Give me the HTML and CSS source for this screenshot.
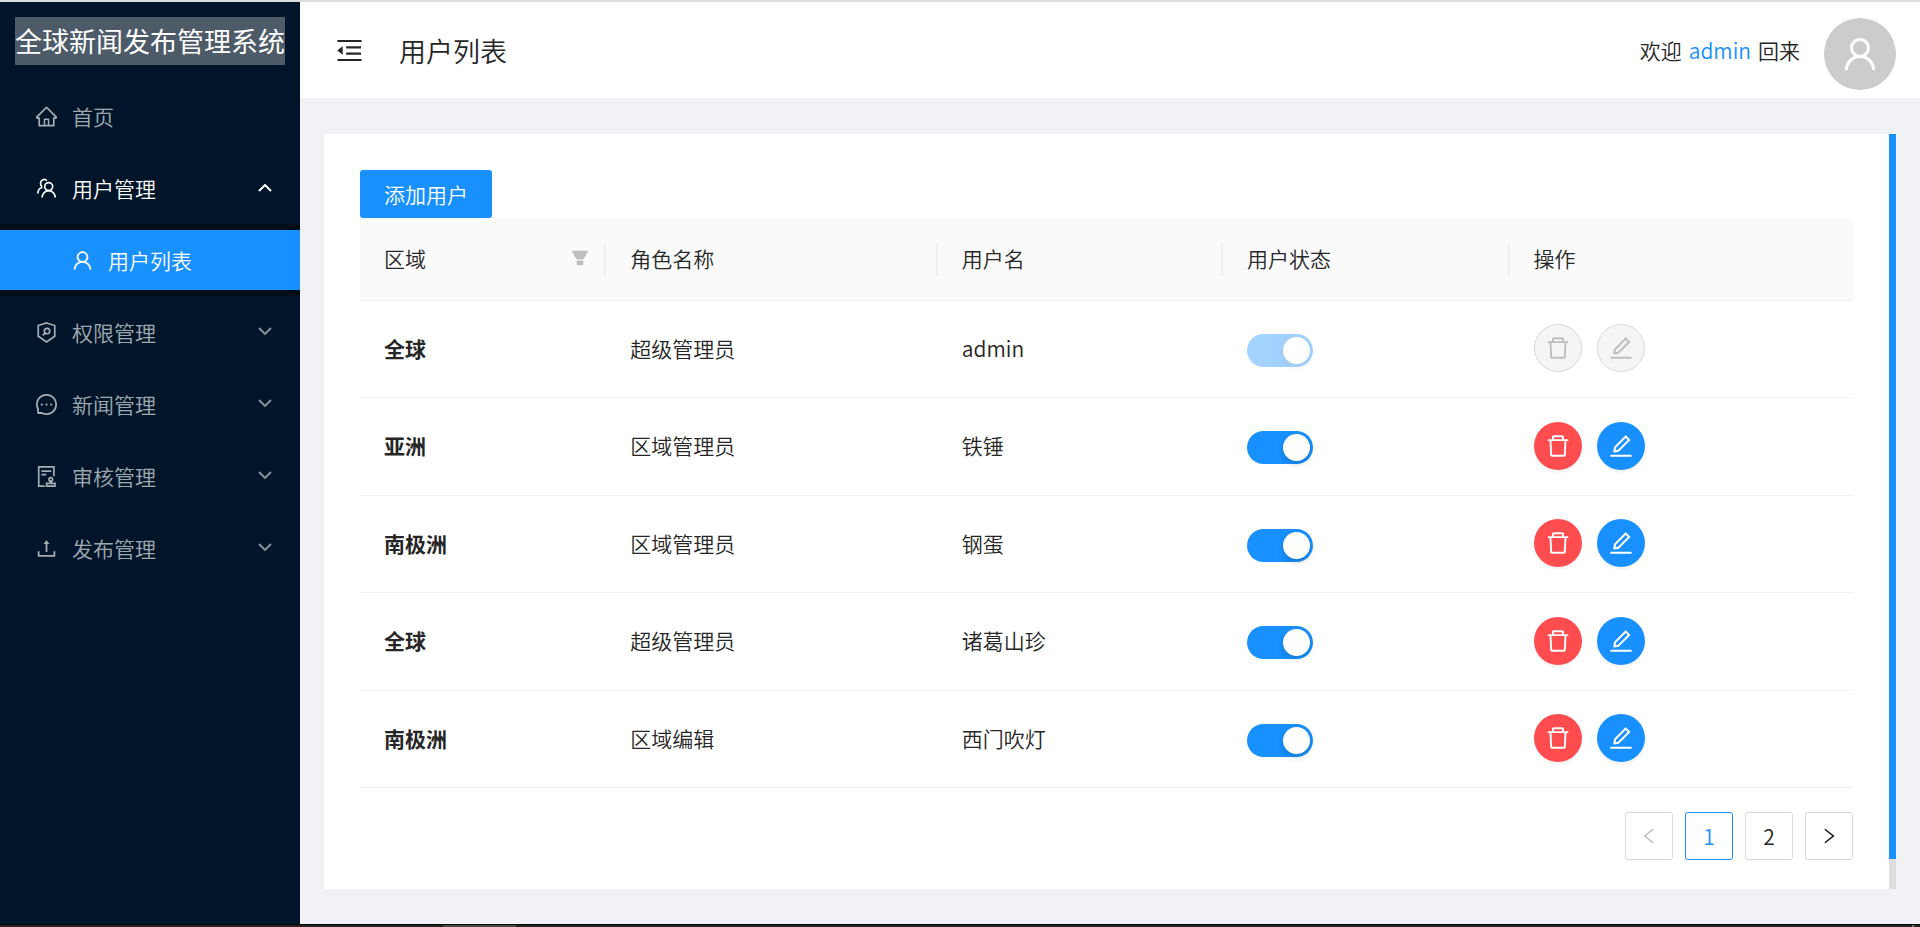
FILE: index.html
```html
<!DOCTYPE html>
<html lang="zh-CN">
<head>
<meta charset="utf-8">
<title>全球新闻发布管理系统</title>
<link rel="stylesheet" href="styles.css">
</head>
<body>
<svg class="sprite" aria-hidden="true">
  <symbol id="i-home" viewBox="64 64 896 896"><path d="M946.5 505L560.1 118.8l-25.9-25.9a31.5 31.5 0 00-44.4 0L77.5 505a63.9 63.9 0 00-18.8 46c.4 35.2 29.7 63.3 64.9 63.3h42.5V940h691.8V614.3h43.4c17.1 0 33.2-6.7 45.3-18.8a63.6 63.6 0 0018.7-45.3c0-17-6.7-33.1-18.8-45.2zM568 868H456V664h112v204zm217.9-325.7V868H632V640c0-22.1-17.9-40-40-40H432c-22.1 0-40 17.9-40 40v228H238.1V542.3h-96l370-369.7 23.1 23.1L882 542.3h-96.1z"/></symbol>
  <symbol id="i-user" viewBox="64 64 896 896"><path d="M858.5 763.6a374 374 0 00-80.6-119.5 375.63 375.63 0 00-119.5-80.6c-.4-.2-.8-.3-1.2-.5C719.5 518 760 444.7 760 362c0-137-111-248-248-248S264 225 264 362c0 82.7 40.5 156 102.8 201.1-.4.2-.8.3-1.2.5-44.8 18.9-85 46-119.5 80.6a375.63 375.63 0 00-80.6 119.5A371.7 371.7 0 00136 901.8a8 8 0 008 8.2h60c4.4 0 7.9-3.5 8-7.8 2-77.2 33-149.5 87.8-204.3 56.7-56.7 132-87.9 212.2-87.9s155.5 31.2 212.2 87.9C779 752.7 810 825 812 902.2c.1 4.4 3.6 7.8 8 7.8h60a8 8 0 008-8.2c-1-47.8-10.9-94.3-29.5-138.2zM512 534c-45.9 0-89.1-17.9-121.6-50.4S340 407.9 340 362c0-45.9 17.9-89.1 50.4-121.6S466.1 190 512 190s89.1 17.9 121.6 50.4S684 316.1 684 362c0 45.9-17.9 89.1-50.4 121.6S557.9 534 512 534z"/></symbol>
  <symbol id="i-team" viewBox="64 64 896 896"><g fill="none" stroke="currentColor" stroke-width="72"><circle cx="605" cy="430" r="170"/><path d="M325 900c0-160 125-295 280-295s280 135 280 295M530 180c-50-55-130-65-195-25-100 60-105 205-10 275M340 470c-120 20-195 120-200 255"/></g></symbol>
  <symbol id="i-scan" viewBox="64 64 896 896"><g fill="none" stroke="currentColor" stroke-width="72"><path d="M512 105L864 215V670L512 915L160 670V215Z"/><circle cx="535" cy="450" r="115"/><path d="M455 535L355 635"/></g></symbol>
  <symbol id="i-message" viewBox="64 64 896 896"><path d="M464 512a48 48 0 1096 0 48 48 0 10-96 0zm200 0a48 48 0 1096 0 48 48 0 10-96 0zm-400 0a48 48 0 1096 0 48 48 0 10-96 0zm661.2-173.6c-22.6-53.7-55-101.9-96.3-143.3a444.35 444.35 0 00-143.3-96.3C630.6 75.7 572.2 64 512 64h-2c-60.6.3-119.3 12.3-174.5 35.9a445.35 445.35 0 00-142 96.5c-40.9 41.3-73 89.3-95.2 142.8-23 55.4-34.6 114.3-34.3 174.9A449.4 449.4 0 00112 714v152a46 46 0 0046 46h152.1A449.4 449.4 0 00510 960h2.1c59.9 0 118-11.6 172.7-34.3a444.48 444.48 0 00142.8-95.2c41.3-40.9 73.8-88.7 96.5-142 23.6-55.2 35.6-113.9 35.9-174.5.3-60.9-11.5-120-34.8-175.6zm-151.1 438C704 845.8 611 884 512 884h-1.7c-60.3-.3-120.2-15.3-173.1-43.5l-8.4-4.5H188V695.2l-4.5-8.4C155.3 633.9 140.3 574 140 513.7c-.4-99.7 37.7-193.3 107.6-263.8 69.8-70.5 163.1-109.5 262.8-109.9h1.7c50 0 98.5 9.7 144.2 28.9 44.6 18.7 84.6 45.6 119 80 34.3 34.3 61.3 74.4 80 119 19.4 46.2 29.1 95.2 28.9 145.8-.6 99.6-39.7 192.9-110.1 262.7z"/></symbol>
  <symbol id="i-audit" viewBox="64 64 896 896"><g fill="none" stroke="currentColor" stroke-width="72"><path d="M440 924H180V100H828V500M296 284H712M296 432H504M516 924V804H872V924ZM694 804V700"/><circle cx="694" cy="636" r="76"/></g></symbol>
  <symbol id="i-upload" viewBox="64 64 896 896"><path d="M400 317.7h73.9V656c0 4.4 3.6 8 8 8h60c4.4 0 8-3.6 8-8V317.7H624c6.7 0 10.4-7.7 6.3-12.9L518.3 163a8 8 0 00-12.6 0l-112 141.7c-4.1 5.3-.4 13 6.3 13zM878 626h-60c-4.4 0-8 3.6-8 8v154H214V634c0-4.4-3.6-8-8-8h-60c-4.4 0-8 3.6-8 8v198c0 17.7 14.3 32 32 32h684c17.7 0 32-14.3 32-32V634c0-4.4-3.6-8-8-8z"/></symbol>
  <symbol id="i-fold" viewBox="64 64 896 896"><path d="M408 442h480c4.4 0 8-3.6 8-8v-56c0-4.4-3.6-8-8-8H408c-4.4 0-8 3.6-8 8v56c0 4.4 3.6 8 8 8zm-8 204c0 4.4 3.6 8 8 8h480c4.4 0 8-3.6 8-8v-56c0-4.4-3.6-8-8-8H408c-4.4 0-8 3.6-8 8v56zm504-486H120c-4.4 0-8 3.6-8 8v56c0 4.4 3.6 8 8 8h784c4.4 0 8-3.6 8-8v-56c0-4.4-3.6-8-8-8zm0 632H120c-4.4 0-8 3.6-8 8v56c0 4.4 3.6 8 8 8h784c4.4 0 8-3.6 8-8v-56c0-4.4-3.6-8-8-8zM115.4 518.9L271.7 642c5.8 4.6 14.4.5 14.4-6.9V388.9c0-7.4-8.5-11.5-14.4-6.9L115.4 505.1a8.74 8.74 0 000 13.8z"/></symbol>
  <symbol id="i-filter" viewBox="64 64 896 896"><path d="M349 838c0 17.7 14.2 32 31.8 32h262.4c17.6 0 31.8-14.3 31.8-32V642H349v196zm531.1-684H143.9c-24.5 0-39.8 26.7-27.5 48l221.3 376h348.8l221.3-376c12.1-21.3-3.2-48-27.7-48z"/></symbol>
  <symbol id="i-delete" viewBox="64 64 896 896"><path d="M360 184h-8c4.4 0 8-3.6 8-8v8h304v-8c0 4.4 3.6 8 8 8h-8v72h72v-80c0-35.3-28.7-64-64-64H352c-35.3 0-64 28.7-64 64v80h72v-72zm504 72H160c-17.7 0-32 14.3-32 32v32c0 4.4 3.6 8 8 8h60.4l24.7 523c1.6 34.1 29.8 61 63.9 61h454c34.2 0 62.3-26.8 63.9-61l24.7-523H888c4.4 0 8-3.6 8-8v-32c0-17.7-14.3-32-32-32zM731.3 840H292.7l-24.2-512h487l-24.2 512z"/></symbol>
  <symbol id="i-edit" viewBox="64 64 896 896"><path d="M257.7 752c2 0 4-.2 6-.5L431.9 722c2-.4 3.9-1.3 5.3-2.8l423.9-423.9a9.96 9.96 0 000-14.1L694.9 114.9c-1.9-1.9-4.4-2.9-7.1-2.9s-5.2 1-7.1 2.9L256.8 538.8c-1.5 1.5-2.4 3.3-2.8 5.3l-29.5 168.2a33.5 33.5 0 009.4 29.8c6.6 6.4 14.9 9.9 23.8 9.9zm67.4-174.4L687.8 215l73.3 73.3-362.7 362.6-88.9 15.7 15.6-89zM880 836H144c-17.7 0-32 14.3-32 32v36c0 4.4 3.6 8 8 8h784c4.4 0 8-3.6 8-8v-36c0-17.7-14.3-32-32-32z"/></symbol>
  <symbol id="i-left" viewBox="64 64 896 896"><path d="M724 218.3V141c0-6.7-7.7-10.4-12.9-6.3L260.3 486.8a31.86 31.86 0 000 50.3l450.8 352.1c5.3 4.1 12.9.4 12.9-6.3v-77.3c0-4.9-2.3-9.6-6.1-12.6l-360-281 360-281.1c3.8-3 6.1-7.7 6.1-12.6z"/></symbol>
  <symbol id="i-right" viewBox="64 64 896 896"><path d="M765.7 486.8L314.9 134.7A7.97 7.97 0 00302 141v77.3c0 4.9 2.3 9.6 6.1 12.6l360 281.1-360 281.1c-3.9 3-6.1 7.7-6.1 12.6V883c0 6.7 7.7 10.4 12.9 6.3l450.8-352.1a31.96 31.96 0 000-50.4z"/></symbol>
  <symbol id="i-down" viewBox="0 0 14 8"><path d="M1 1L7 7L13 1" fill="none" stroke="currentColor" stroke-width="2"/></symbol>
  <symbol id="i-up" viewBox="0 0 14 8"><path d="M1 7L7 1L13 7" fill="none" stroke="currentColor" stroke-width="2"/></symbol>
</svg>
<div class="app">
  <aside class="sider">
    <div class="logo">全球新闻发布管理系统</div>
    <nav class="menu">
      <a class="menu-item" href="#home"><svg class="icon"><use href="#i-home"/></svg>首页</a>
      <button class="menu-item open" type="button" aria-expanded="true"><svg class="icon"><use href="#i-team"/></svg>用户管理<svg class="arrow"><use href="#i-up"/></svg></button>
      <div class="submenu">
        <a class="menu-item selected" href="#users"><svg class="icon"><use href="#i-user"/></svg>用户列表</a>
      </div>
      <button class="menu-item" type="button" aria-expanded="false"><svg class="icon"><use href="#i-scan"/></svg>权限管理<svg class="arrow"><use href="#i-down"/></svg></button>
      <button class="menu-item" type="button" aria-expanded="false"><svg class="icon"><use href="#i-message"/></svg>新闻管理<svg class="arrow"><use href="#i-down"/></svg></button>
      <button class="menu-item" type="button" aria-expanded="false"><svg class="icon"><use href="#i-audit"/></svg>审核管理<svg class="arrow"><use href="#i-down"/></svg></button>
      <button class="menu-item" type="button" aria-expanded="false"><svg class="icon"><use href="#i-upload"/></svg>发布管理<svg class="arrow"><use href="#i-down"/></svg></button>
    </nav>
  </aside>
  <div class="main">
    <header class="header">
      <button class="fold" type="button" aria-label="收起菜单"><svg class="icon"><use href="#i-fold"/></svg></button>
      <h1 class="title">用户列表</h1>
      <div class="welcome"><span>欢迎</span><a href="#me">admin</a><span>回来</span></div>
      <div class="avatar"><svg class="icon"><use href="#i-user"/></svg></div>
    </header>
    <div class="panel">
    <main class="card">
      <button class="add" type="button">添加用户</button>
      <table class="table">
        <colgroup><col class="c-region"><col class="c-role"><col class="c-name"><col class="c-state"><col class="c-ops"></colgroup>
        <thead>
          <tr>
            <th><div class="th-filter">区域<button type="button" class="filter" aria-label="筛选"><svg class="icon"><use href="#i-filter"/></svg></button></div></th>
            <th>角色名称</th><th>用户名</th><th>用户状态</th><th>操作</th>
          </tr>
        </thead>
        <tbody>
          <tr><td><b>全球</b></td><td>超级管理员</td><td>admin</td><td><input class="switch" type="checkbox" role="switch" aria-label="用户状态" checked disabled></td>
            <td><div class="ops"><button class="round danger" type="button" aria-label="删除" disabled><svg class="icon"><use href="#i-delete"/></svg></button><button class="round" type="button" aria-label="编辑" disabled><svg class="icon"><use href="#i-edit"/></svg></button></div></td></tr>
          <tr><td><b>亚洲</b></td><td>区域管理员</td><td>铁锤</td><td><input class="switch" type="checkbox" role="switch" aria-label="用户状态" checked></td>
            <td><div class="ops"><button class="round danger" type="button" aria-label="删除"><svg class="icon"><use href="#i-delete"/></svg></button><button class="round" type="button" aria-label="编辑"><svg class="icon"><use href="#i-edit"/></svg></button></div></td></tr>
          <tr><td><b>南极洲</b></td><td>区域管理员</td><td>钢蛋</td><td><input class="switch" type="checkbox" role="switch" aria-label="用户状态" checked></td>
            <td><div class="ops"><button class="round danger" type="button" aria-label="删除"><svg class="icon"><use href="#i-delete"/></svg></button><button class="round" type="button" aria-label="编辑"><svg class="icon"><use href="#i-edit"/></svg></button></div></td></tr>
          <tr><td><b>全球</b></td><td>超级管理员</td><td>诸葛山珍</td><td><input class="switch" type="checkbox" role="switch" aria-label="用户状态" checked></td>
            <td><div class="ops"><button class="round danger" type="button" aria-label="删除"><svg class="icon"><use href="#i-delete"/></svg></button><button class="round" type="button" aria-label="编辑"><svg class="icon"><use href="#i-edit"/></svg></button></div></td></tr>
          <tr><td><b>南极洲</b></td><td>区域编辑</td><td>西门吹灯</td><td><input class="switch" type="checkbox" role="switch" aria-label="用户状态" checked></td>
            <td><div class="ops"><button class="round danger" type="button" aria-label="删除"><svg class="icon"><use href="#i-delete"/></svg></button><button class="round" type="button" aria-label="编辑"><svg class="icon"><use href="#i-edit"/></svg></button></div></td></tr>
        </tbody>
      </table>
      <nav class="pagination" aria-label="分页">
        <button type="button" aria-label="上一页" disabled><svg class="icon"><use href="#i-left"/></svg></button>
        <button type="button" class="current" aria-current="page">1</button>
        <button type="button">2</button>
        <button type="button" aria-label="下一页"><svg class="icon"><use href="#i-right"/></svg></button>
      </nav>
    </main>
    <div class="rail" aria-hidden="true"><div class="thumb"></div></div>
    </div>
  </div>
</div>
<div class="taskbar"><span class="task"></span><span class="tick"></span></div>
</body>
</html>
```
FILE: styles.css
```css
* { box-sizing: border-box; }

body {
  margin: 0;
  height: 100vh;
  display: flex;
  flex-direction: column;
  border-top: 2px solid #dcdce1;
  background: #f0f2f5;
  color: #262626;
  font: 350 21px/33px "Noto Sans CJK SC", sans-serif;
}

button { font: inherit; color: inherit; border: 0; padding: 0; background: none; cursor: pointer; }
a { color: #1890ff; text-decoration: none; }
.sprite { display: none; }
.icon { display: block; flex: none; width: 21px; height: 21px; fill: currentColor; }

.app { flex: 1; min-height: 0; display: flex; }

.sider { flex: none; width: 300px; background: #001529; }
.logo {
  margin: 15px 15px 21px;
  height: 48px;
  line-height: 48px;
  font-size: 27px;
  font-weight: 400;
  white-space: nowrap;
  color: #fff;
  background: rgba(255, 255, 255, .3);
}
.menu { display: flex; flex-direction: column; gap: 12px; }
.menu-item {
  display: flex;
  align-items: center;
  gap: 15px;
  width: 100%;
  height: 60px;
  padding: 0 28px 0 36px;
  color: rgba(255, 255, 255, .65);
}
.menu-item.open { color: #fff; }
.submenu { margin: -6px 0; padding: 6px 0; background: #000c17; }
.menu-item.selected { padding-left: 72px; color: #fff; background: #1890ff; }
.arrow { flex: none; width: 14px; height: 8px; margin: 0 0 3px auto; opacity: .8; }
.open .arrow { margin-bottom: 0; opacity: 1; }

.main { flex: 1; min-width: 0; display: flex; flex-direction: column; }
.header {
  flex: none;
  display: flex;
  align-items: center;
  height: 96px;
  padding: 0 24px 0 36px;
  background: #fff;
}
.fold .icon { width: 27px; height: 27px; }
.title { margin: 0 0 0 36px; font-size: 27px; font-weight: 350; }
.welcome { display: flex; gap: 7px; margin: 0 24px 0 auto; }
.avatar {
  display: flex;
  align-items: center;
  justify-content: center;
  width: 72px;
  height: 72px;
  margin-top: 8px;
  border-radius: 50%;
  color: #fff;
  background: #ccc;
}
.avatar .icon { width: 36px; height: 36px; }

.panel {
  flex: 1;
  min-height: 0;
  display: flex;
  margin: 36px 24px 35px;
  background: #fff;
}
.card {
  flex: 1;
  min-width: 0;
  padding: 36px 36px 60px;
  overflow-y: auto;
  scrollbar-width: none;
}
.rail { flex: none; width: 7px; background: #ddd; }
.thumb { height: 96%; background: #1890ff; }

.add {
  display: block;
  height: 48px;
  padding: 0 24px;
  border-radius: 3px;
  color: #fff;
  background: #1890ff;
}

.table { width: 100%; table-layout: fixed; border-collapse: separate; border-spacing: 0; }
.c-region { width: 16.5%; }
.c-role { width: 22.2%; }
.c-name { width: 19.1%; }
.c-state { width: 19.2%; }
th, td { padding: 0 24px 2px; text-align: left; vertical-align: middle; border-bottom: 1px solid #f0f0f0; }
th {
  height: 83px;
  font-weight: 350;
  background: linear-gradient(#f0f0f0, #f0f0f0) right center / 2px 33px no-repeat #fafafa;
}
th:last-child { background: #fafafa; border-top-right-radius: 3px; }
td { height: 97px; }
tbody tr:nth-child(even) td { height: 98px; }
td b { font-weight: 700; }
.th-filter { display: flex; align-items: center; justify-content: space-between; }
.filter { color: #bfbfbf; margin-right: -7px; }
.filter .icon { width: 18px; height: 18px; }

.switch {
  appearance: none;
  display: block;
  width: 66px;
  height: 33px;
  margin: 4px 0 0;
  padding: 3px;
  border-radius: 17px;
  background: #1890ff;
}
.switch::before {
  content: "";
  display: block;
  width: 27px;
  height: 27px;
  margin-left: auto;
  border-radius: 50%;
  background: #fff;
  box-shadow: 0 3px 6px rgba(0, 35, 11, .2);
}
.switch:disabled { opacity: .4; }

.ops { display: flex; gap: 15px; }
.round {
  display: flex;
  align-items: center;
  justify-content: center;
  width: 48px;
  height: 48px;
  border-radius: 50%;
  color: #fff;
  background: #1890ff;
  box-shadow: 0 3px 0 rgba(0, 0, 0, .04);
}
.round.danger { background: #ff4d4f; }
.round:disabled { color: #bfbfbf; background: #f5f5f5; border: 1px solid #d9d9d9; box-shadow: none; }
.round .icon { width: 24px; height: 24px; }

.pagination { display: flex; justify-content: flex-end; gap: 12px; margin-top: 24px; }
.pagination button {
  display: flex;
  align-items: center;
  justify-content: center;
  width: 48px;
  height: 48px;
  border: 1px solid #d9d9d9;
  border-radius: 3px;
}
.pagination .icon { width: 18px; height: 18px; }
.pagination .current { color: #1890ff; border-color: #1890ff; }
.pagination button:disabled { color: #bfbfbf; }

.taskbar {
  flex: none;
  display: flex;
  justify-content: space-between;
  height: 3px;
  padding: 0 6px 0 443px;
  border-top: 1px solid #000;
  background: #222426;
}
.task { width: 73px; background: #4a4a4a; }
.tick { width: 2px; background: #777; }
```
